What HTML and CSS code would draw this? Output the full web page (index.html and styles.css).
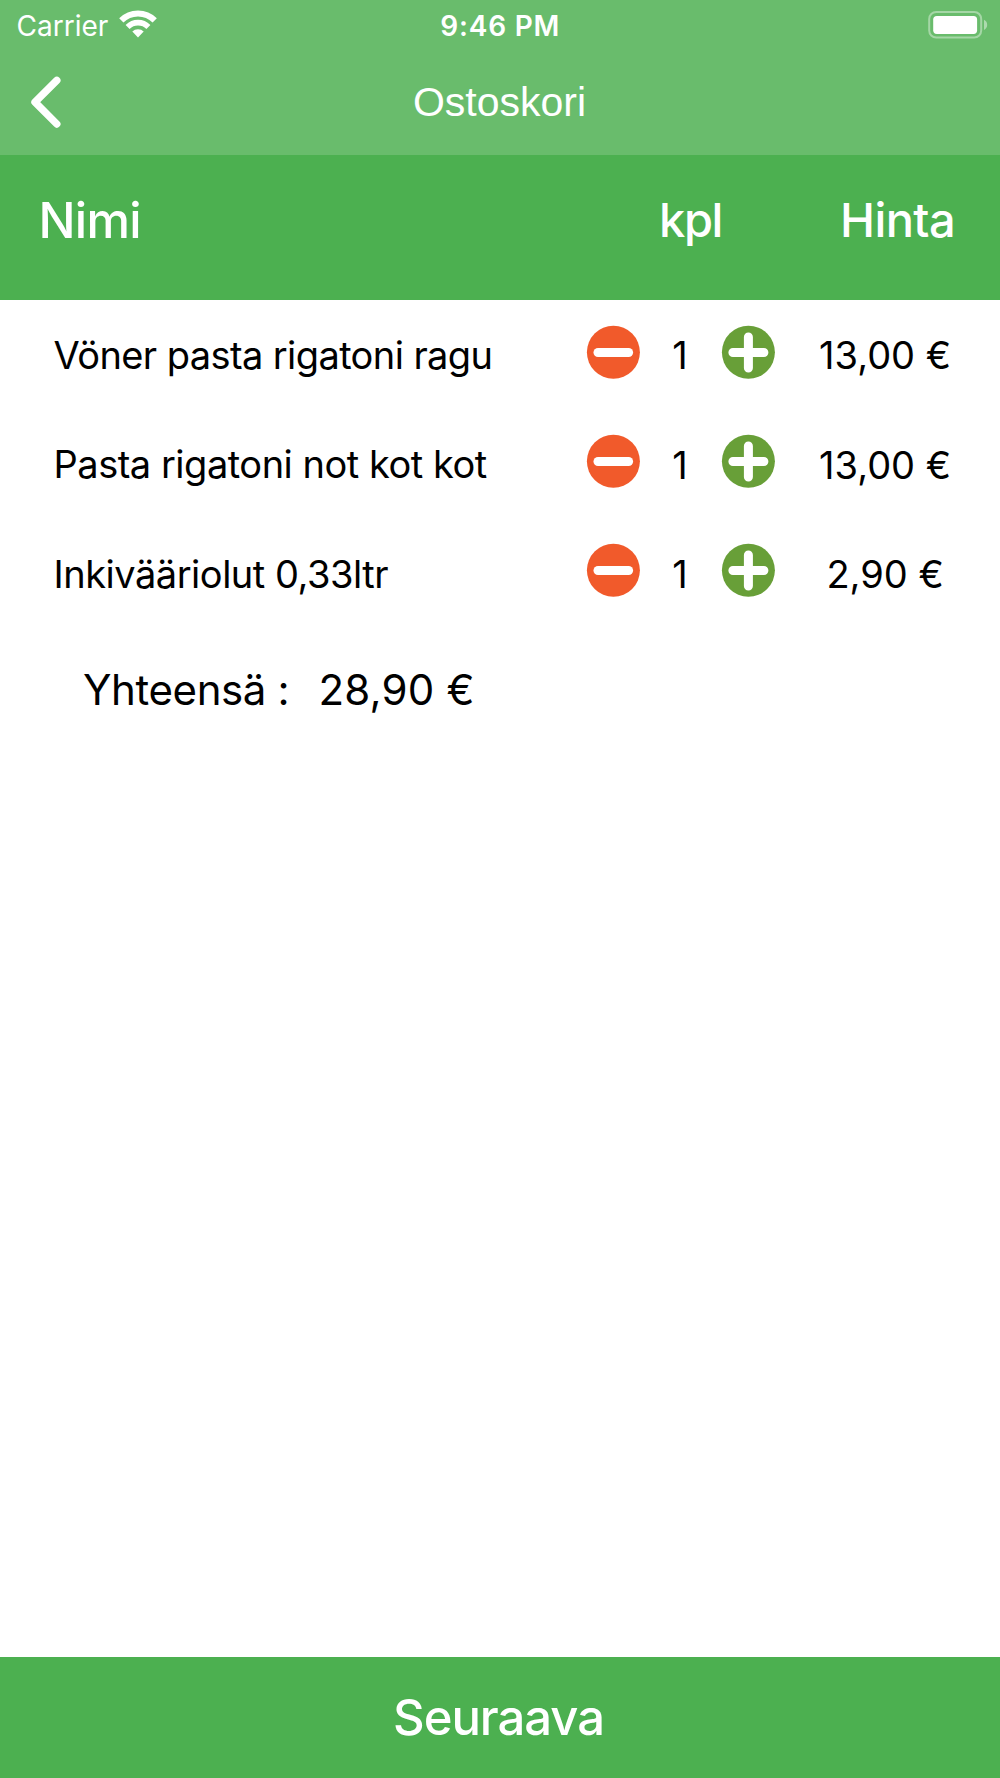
FILE: index.html
```
<!DOCTYPE html>
<html lang="fi">
<head>
<meta charset="utf-8">
<title>Ostoskori</title>
<link rel="stylesheet" href="styles.css">
</head>
<body>
<svg class="sprite" aria-hidden="true">
  <symbol id="minus" viewBox="0 0 54 54">
    <circle cx="27.4" cy="27.3" r="26.5" fill="#f15a2b"/>
    <path d="M12 27.5h30.6" stroke="#fff" stroke-width="9" stroke-linecap="round"/>
  </symbol>
  <symbol id="plus" viewBox="0 0 54 54">
    <circle cx="27.4" cy="27.3" r="26.5" fill="#689f38"/>
    <path d="M11.9 27.5h31M27.4 12v31" stroke="#fff" stroke-width="9" stroke-linecap="round"/>
  </symbol>
</svg>
<div class="screen">
  <header class="top">
    <div class="status">
      <div class="status-left">
        <span class="carrier">Carrier</span>
        <svg class="wifi" width="38" height="28" viewBox="0 0 38 28">
          <g fill="none" stroke="#fff">
            <path d="M2.3 10.4A23.6 23.6 0 0 1 35.7 10.4" stroke-width="6"/>
            <path d="M8.6 16.9A14.7 14.7 0 0 1 29.4 16.9" stroke-width="5.6"/>
          </g>
          <path d="M19 27.4l-5.7-5.8a8 8 0 0 1 11.4 0z" fill="#fff"/>
        </svg>
      </div>
      <span class="clock">9:46 PM</span>
      <svg class="battery" width="60" height="28" viewBox="0 0 60 28">
        <rect x="1.2" y="1" width="52" height="25.6" rx="7" fill="none" stroke="#fff" stroke-opacity=".4" stroke-width="2"/>
        <rect x="5.2" y="4.9" width="43.9" height="18" rx="3.6" fill="#fff"/>
        <path d="M56 8.7q3.2 1.6 3.2 5.1t-3.2 5.1z" fill="#fff" fill-opacity=".45"/>
      </svg>
    </div>
    <nav class="nav">
      <svg class="back" width="32" height="52" viewBox="0 0 32 52">
        <path d="M26.8 4.4L5 26.2 26.8 48" fill="none" stroke="#fff" stroke-width="7.4" stroke-linecap="round" stroke-linejoin="round"/>
      </svg>
      <h1 class="title">Ostoskori</h1>
    </nav>
  </header>
  <div class="head">
    <span class="h-name">Nimi</span>
    <span class="h-qty">kpl</span>
    <span class="h-price">Hinta</span>
  </div>
  <main class="cart">
    <div class="item">
      <span class="name">Vöner pasta rigatoni ragu</span>
      <svg class="btn"><use href="#minus"/></svg>
      <span class="qty">1</span>
      <svg class="btn"><use href="#plus"/></svg>
      <span class="price">13,00 €</span>
    </div>
    <div class="item">
      <span class="name">Pasta rigatoni not kot kot</span>
      <svg class="btn"><use href="#minus"/></svg>
      <span class="qty">1</span>
      <svg class="btn"><use href="#plus"/></svg>
      <span class="price">13,00 €</span>
    </div>
    <div class="item">
      <span class="name">Inkivääriolut 0,33ltr</span>
      <svg class="btn"><use href="#minus"/></svg>
      <span class="qty">1</span>
      <svg class="btn"><use href="#plus"/></svg>
      <span class="price">2,90 €</span>
    </div>
    <div class="total">
      <span class="total-label">Yhteensä :</span>
      <span class="total-sum">28,90 €</span>
    </div>
  </main>
  <footer class="next">Seuraava</footer>
</div>
</body>
</html>
```
FILE: styles.css
```
* { box-sizing: border-box; }

body {
  margin: 0;
  background: #fff;
  color: #000;
  font-family: Inter, "Liberation Sans", sans-serif;
  white-space: nowrap;
}

svg { display: block; flex: none; }

.sprite { display: none; }

.screen {
  display: flex;
  flex-direction: column;
  width: 1000px;
  height: 1778px;
}

/* Status bar and navigation */
.top {
  height: 155px;
  background: #69bc6c;
  color: #fff;
}

.status {
  display: grid;
  grid-template-columns: 1fr auto 1fr;
  align-items: center;
  height: 51px;
  padding: 0 12px 0 16.5px;
  font-size: 28px;
}

.status-left { display: flex; align-items: center; gap: 11px; }
.wifi { margin-bottom: 3px; }
.clock { font-weight: 600; letter-spacing: .8px; margin-left: -4px; }
.battery { justify-self: end; margin-bottom: 2px; }

.nav {
  display: grid;
  grid-template-columns: 60px 1fr 60px;
  align-items: center;
  height: 104px;
  padding: 0 1px 2px 0;
}

.back { margin-left: 30px; }

.title {
  margin: 0;
  text-align: center;
  font: 400 41px "Liberation Sans", Arial, sans-serif;
}

/* Column headings */
.head {
  display: grid;
  grid-template-columns: 659px 181px 1fr;
  align-items: center;
  height: 144.6px;
  padding-bottom: 14px;
  background: #4cb050;
  color: #fff;
  font-size: 47px;
  font-weight: 500;
}

.h-name { padding-left: 38.5px; font-size: 49px; letter-spacing: -.7px; }
.h-qty { letter-spacing: -1.4px; margin-bottom: 2px; }
.h-price { letter-spacing: -.6px; margin-bottom: 2px; }

/* Cart rows */
.cart { flex: 1; font-size: 38px; }

.item {
  display: grid;
  grid-template-columns: 586px 54px 81.2px 54px 1fr;
  align-items: center;
  height: 109.4px;
}

.name { padding-left: 53.5px; margin-top: 1.4px; letter-spacing: -.48px; }
.item:nth-child(1) .name { letter-spacing: -.59px; }
.btn { width: 54px; height: 54px; margin-bottom: 5.4px; }
.qty { text-align: center; margin-top: 2px; padding-right: 1px; }
.price { padding-right: 5px; text-align: center; margin-top: 2px; }

.total {
  display: flex;
  align-items: center;
  height: 124px;
  padding-left: 83px;
  font-size: 42px;
}

.total-label { width: 235.5px; letter-spacing: -.4px; }
.total-sum { letter-spacing: .2px; }

/* Bottom action */
.next {
  height: 121px;
  padding-right: 3px;
  background: #4cb050;
  color: #fff;
  font-size: 49px;
  font-weight: 500;
  letter-spacing: -1.05px;
  line-height: 121px;
  text-align: center;
}
```
